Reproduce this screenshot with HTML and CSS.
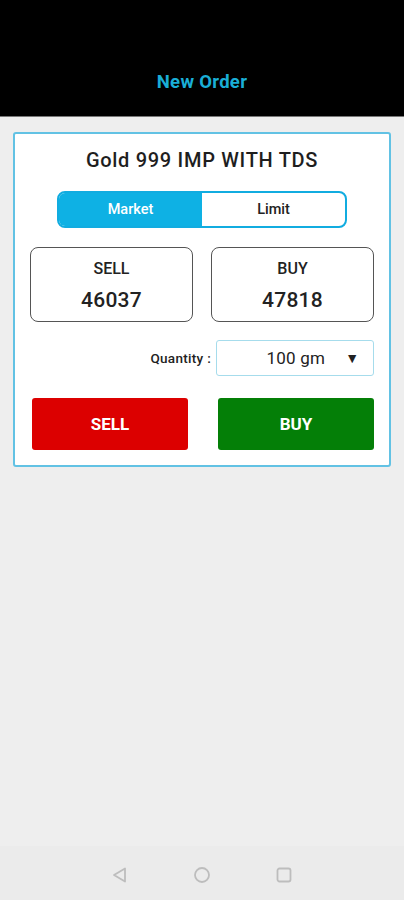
FILE: index.html
```html
<!DOCTYPE html>
<html lang="en">

<head>
    <meta charset="UTF-8">
    <meta name="viewport" content="width=device-width, initial-scale=1.0">
    <title>New Order</title>
    <link rel="stylesheet" href="styles.css">
</head>

<body>

    <div class="screen">

        <header class="topbar">
            <h1>New Order</h1>
        </header>

        <main class="content">
            <div class="order-card">
                <h2 class="product">Gold 999 IMP WITH TDS</h2>

                <div class="segment">
                    <span class="seg-item active">Market</span>
                    <span class="seg-item">Limit</span>
                </div>

                <div class="prices">
                    <div class="price-box">
                        <span class="price-label">SELL</span>
                        <span class="price-value">46037</span>
                    </div>
                    <div class="price-box">
                        <span class="price-label">BUY</span>
                        <span class="price-value">47818</span>
                    </div>
                </div>

                <div class="qty-row">
                    <span class="qty-label">Quantity :</span>
                    <div class="qty-select">
                        <span class="qty-value">100 gm</span>
                        <span class="qty-arrow">&#9660;</span>
                    </div>
                </div>

                <div class="actions">
                    <a class="btn btn-sell">SELL</a>
                    <a class="btn btn-buy">BUY</a>
                </div>
            </div>
        </main>

        <nav class="navbar">
            <svg width="18" height="18" viewBox="0 0 18 18">
                <path d="M14 2.5 L14 15.5 L3 9 Z" fill="none" stroke="#bdbdbd" stroke-width="1.8" stroke-linejoin="round"/>
            </svg>
            <svg width="18" height="18" viewBox="0 0 18 18">
                <circle cx="9" cy="9" r="7" fill="none" stroke="#bdbdbd" stroke-width="1.8"/>
            </svg>
            <svg width="18" height="18" viewBox="0 0 18 18">
                <rect x="2.5" y="2.5" width="13" height="13" rx="2" fill="none" stroke="#bdbdbd" stroke-width="1.8"/>
            </svg>
        </nav>

    </div>

</body>

</html>
```

FILE: styles.css
```css
* {
    margin: 0px;
    box-sizing: border-box;
}

body {
    font-family: Roboto, 'Noto Sans', sans-serif;
    background-color: #eeeeee;
    color: #222;
}

.screen {
    display: flex;
    flex-direction: column;
    height: 900px;
}

.topbar {
    height: 117px;
    background-color: #000;
    border-bottom: 1px solid #777;
    display: flex;
    align-items: flex-end;
    justify-content: center;
    padding-bottom: 23px;
}

.topbar h1 {
    color: #1aaed6;
    font-size: 18.5px;
    font-weight: 700;
    letter-spacing: 0.3px;
}

.content {
    flex: 1;
    padding: 15px 13px 0 13px;
}

.order-card {
    background-color: #fff;
    border: 2px solid #62c2e4;
    border-radius: 3px;
    padding: 14px 14px 15px 14px;
}

.product {
    text-align: center;
    font-size: 20px;
    line-height: 24px;
    font-weight: 500;
    letter-spacing: 0.7px;
    color: #1e1e1e;
}

.segment {
    display: grid;
    grid-template-columns: 1fr 1fr;
    width: 290px;
    height: 37px;
    margin: 19px auto 0 auto;
    border: 2px solid #11ace0;
    border-radius: 8px;
    overflow: hidden;
}

.seg-item {
    display: flex;
    align-items: center;
    justify-content: center;
    font-size: 14.5px;
    font-weight: 500;
    color: #222;
}

.seg-item.active {
    background-color: #0eb1e4;
    color: #fff;
}

.prices {
    display: grid;
    grid-template-columns: 163px 163px;
    justify-content: space-between;
    padding: 0 1px;
    margin-top: 19px;
}

.price-box {
    height: 75px;
    border: 1px solid #555;
    border-radius: 8px;
    display: flex;
    flex-direction: column;
    align-items: center;
    justify-content: center;
    gap: 10px;
    padding-top: 3px;
}

.price-label {
    font-size: 16px;
    line-height: 18px;
    font-weight: 500;
}

.price-value {
    font-size: 21px;
    line-height: 24px;
    font-weight: 500;
    letter-spacing: 0.3px;
}

.qty-row {
    display: flex;
    justify-content: flex-end;
    align-items: center;
    gap: 5px;
    margin-top: 18px;
    padding-right: 1px;
}

.qty-label {
    font-size: 13.5px;
    font-weight: 500;
    letter-spacing: 0.3px;
}

.qty-select {
    width: 158px;
    height: 36px;
    border: 1px solid #a6dcec;
    border-radius: 3px;
    display: flex;
    align-items: center;
    justify-content: flex-end;
    padding-right: 14px;
    gap: 20px;
}

.qty-value {
    font-size: 17px;
    letter-spacing: 0.2px;
}

.qty-arrow {
    font-size: 14px;
}

.actions {
    display: grid;
    grid-template-columns: 156px 156px;
    justify-content: space-between;
    padding: 0 1px 0 3px;
    margin-top: 22px;
}

.btn {
    height: 52px;
    border-radius: 3px;
    display: flex;
    align-items: center;
    justify-content: center;
    color: #fff;
    font-size: 17px;
    font-weight: 700;
    text-decoration: none;
}

.btn-sell {
    background-color: #dc0000;
}

.btn-buy {
    background-color: #047f07;
}

.navbar {
    height: 54px;
    background-color: #ebebeb;
    display: flex;
    justify-content: center;
    align-items: center;
    gap: 64px;
    padding-top: 4px;
}
```
